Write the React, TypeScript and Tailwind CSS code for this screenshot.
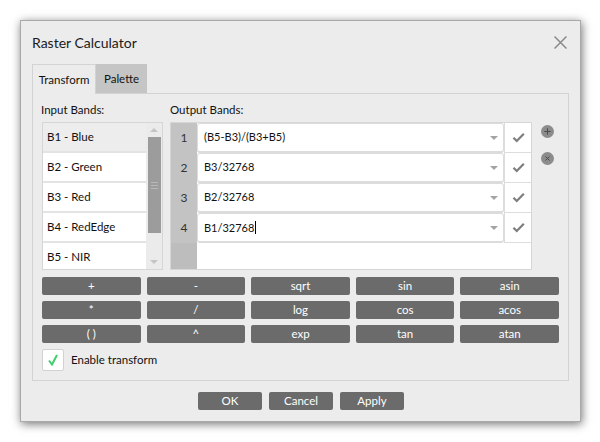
import React from 'react';

const bands = ['B1 - Blue', 'B2 - Green', 'B3 - Red', 'B4 - RedEdge', 'B5 - NIR'];
const outputs = ['(B5-B3)/(B3+B5)', 'B3/32768', 'B2/32768', 'B1/32768'];
const ops = ['+', '-', 'sqrt', 'sin', 'asin', '*', '/', 'log', 'cos', 'acos', '( )', '^', 'exp', 'tan', 'atan'];

function GreyCheck() {
  return (
    <svg viewBox="0 0 14 12" className="h-[11px] w-[13px]" fill="none" stroke="#7d7d7d" strokeWidth="2.4" strokeLinecap="butt" strokeLinejoin="miter">
      <path d="M1.5 6.2l3.6 3.6L12.8 1.8" />
    </svg>
  );
}

function Circle({ kind }: { kind: 'plus' | 'cross' }) {
  return (
    <div className="flex h-[13px] w-[13px] items-center justify-center rounded-full bg-[#8c8c8c]">
      <svg viewBox="0 0 10 10" className="h-[9px] w-[9px]" fill="none" stroke="#4a4a4a" strokeWidth="1.1">
        {kind === 'plus' ? <path d="M5 1.5v7M1.5 5h7" /> : <path d="M2.8 2.8l4.4 4.4M7.2 2.8l-4.4 4.4" />}
      </svg>
    </div>
  );
}

export default function App() {
  return (
    <div className="h-[442px] w-[600px] overflow-hidden bg-white pl-[20px] pt-[20px] font-['Segoe_UI','Lato','Noto_Sans',sans-serif] text-[11px] text-[#111]">
      <div className="flex h-[402px] w-[561px] flex-col border border-[#a9a9a9] bg-[#ececec] shadow-[1px_2px_9px_rgba(0,0,0,0.55)]">
        {/* title */}
        <div className="flex h-[43px] shrink-0 items-center justify-between pl-[11px] pr-[13px]">
          <span className="text-[14px] text-[#1a1a1a]">Raster Calculator</span>
          <svg viewBox="0 0 12 12" className="h-[13px] w-[13px]" fill="none" stroke="#8a8a8a" strokeWidth="1.4">
            <path d="M0.5 0.5l11 11M11.5 0.5l-11 11" />
          </svg>
        </div>

        {/* tabs */}
        <div className="ml-[11px] flex h-[29px] shrink-0 items-end">
          <div className="relative z-10 -mb-px flex h-[30px] w-[64px] items-center justify-center border border-b-0 border-[#d3d3d3] bg-[#ececec] text-[11.5px]">
            Transform
          </div>
          <div className="flex h-[29px] w-[51px] items-center justify-center bg-[#c5c5c5] text-[11.5px]">Palette</div>
        </div>

        {/* pane */}
        <div className="ml-[11px] flex h-[288px] w-[537px] shrink-0 flex-col border border-[#d3d3d3] pl-[9px]">
          <div className="flex h-[28px] shrink-0 items-center pt-[4px] text-[11.5px]">
            <span className="-ml-px w-[129px]">Input Bands:</span>
            <span>Output Bands:</span>
          </div>

          <div className="flex h-[148px] shrink-0">
            {/* input list */}
            <div className="flex h-[148px] w-[121px] overflow-hidden border border-[#d6d6d6] bg-white">
              <div className="flex flex-1 flex-col">
                {bands.map((b, i) => (
                  <div
                    key={b}
                    className={`flex h-[30px] shrink-0 items-center border-b-2 border-[#e3e3e3] pl-[4px] text-[11.5px] ${i === 0 ? 'bg-[#ededed]' : 'bg-white'}`}
                  >
                    {b}
                  </div>
                ))}
              </div>
              <div className="flex w-[16px] flex-col items-center bg-[#ebebeb]">
                <div className="flex h-[14px] items-center justify-center">
                  <div className="h-0 w-0 border-x-[4px] border-b-[4px] border-x-transparent border-b-[#c4c4c4]" />
                </div>
                <div className="flex h-[96px] w-[13px] flex-col items-center justify-center gap-[2px] bg-[#9c9c9c]">
                  <div className="h-px w-[7px] bg-[#b8b8b8]" />
                  <div className="h-px w-[7px] bg-[#b8b8b8]" />
                  <div className="h-px w-[7px] bg-[#b8b8b8]" />
                </div>
                <div className="flex-1" />
                <div className="flex h-[14px] items-center justify-center">
                  <div className="h-0 w-0 border-x-[4px] border-t-[4px] border-x-transparent border-t-[#c4c4c4]" />
                </div>
              </div>
            </div>

            {/* output table */}
            <div className="ml-[7px] flex h-[148px] w-[362px] flex-col overflow-hidden border border-[#d6d6d6] bg-white">
              {outputs.map((o, i) => (
                <div key={i} className="flex h-[30px] shrink-0">
                  <div className="flex w-[26px] shrink-0 items-center justify-center bg-[#c3c3c3] text-[12px] text-[#333]">
                    {i + 1}
                  </div>
                  <div className="flex flex-1 items-center rounded-[3px] border border-b-2 border-[#dcdcdc] bg-white pl-[6px] text-[11px]">
                    <span className="flex-1">
                      {o}
                      {i === 3 && <span className="ml-px inline-block h-[13px] w-px translate-y-[2px] bg-black" />}
                    </span>
                    <div className="mr-[5px] h-0 w-0 border-x-[4px] border-t-[4px] border-x-transparent border-t-[#a3a3a3]" />
                  </div>
                  <div className="flex w-[27px] shrink-0 items-center justify-center border-b border-l border-[#dddddd]">
                    <GreyCheck />
                  </div>
                </div>
              ))}
              <div className="flex flex-1">
                <div className="w-[26px] bg-[#bdbdbd]" />
                <div className="flex-1 bg-white" />
              </div>
            </div>

            {/* circle buttons */}
            <div className="ml-[9px] flex flex-col gap-[14px] pt-[3px]">
              <Circle kind="plus" />
              <Circle kind="cross" />
            </div>
          </div>

          {/* operators */}
          <div className="mt-[7px] grid w-[517px] grid-cols-5 gap-x-[6px] gap-y-[6px]">
            {ops.map((op) => (
              <div key={op} className="flex h-[18px] items-center justify-center rounded-[2px] bg-[#6b6b6b] text-[11.5px] text-white">
                {op}
              </div>
            ))}
          </div>

          {/* enable transform */}
          <div className="mt-[6px] flex items-center">
            <div className="flex h-[22px] w-[22px] items-center justify-center rounded-[2px] border border-[#d2d2d2] bg-white">
              <svg viewBox="0 0 10 12" className="h-[12px] w-[10px]" fill="none" stroke="#3fcf6d" strokeWidth="2">
                <path d="M1 6.5l3 4L9 1" />
              </svg>
            </div>
            <span className="ml-[7px] text-[11.5px]">Enable transform</span>
          </div>
        </div>

        {/* bottom buttons */}
        <div className="mt-[11px] flex justify-center gap-[7px] pl-px">
          {['OK', 'Cancel', 'Apply'].map((b) => (
            <div key={b} className="flex h-[18px] w-[64px] items-center justify-center rounded-[2px] bg-[#6b6b6b] text-[11.5px] text-white">
              {b}
            </div>
          ))}
        </div>
      </div>
    </div>
  );
}
